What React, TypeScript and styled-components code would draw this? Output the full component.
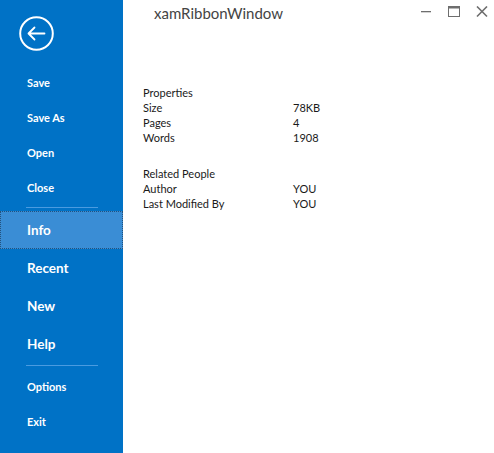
import React from "react";
import styled, { createGlobalStyle } from "styled-components";

const GlobalStyle = createGlobalStyle`
  html, body {
    margin: 0;
    padding: 0;
    background: #ffffff;
    font-family: "Segoe UI", Lato, "Noto Sans", sans-serif;
  }
`;

type NavItem = {
  label: string;
  large?: boolean;
  active?: boolean;
  separatorBefore?: boolean;
};

const navItems: NavItem[] = [
  { label: "Save" },
  { label: "Save As" },
  { label: "Open" },
  { label: "Close" },
  { label: "Info", large: true, active: true, separatorBefore: true },
  { label: "Recent", large: true },
  { label: "New", large: true },
  { label: "Help", large: true },
  { label: "Options", separatorBefore: true },
  { label: "Exit" },
];

type Prop = { name: string; value: string };

const sections: { title: string; rows: Prop[] }[] = [
  {
    title: "Properties",
    rows: [
      { name: "Size", value: "78KB" },
      { name: "Pages", value: "4" },
      { name: "Words", value: "1908" },
    ],
  },
  {
    title: "Related People",
    rows: [
      { name: "Author", value: "YOU" },
      { name: "Last Modified By", value: "YOU" },
    ],
  },
];

function BackButton() {
  return (
    <BackCircle>
      <svg width="35" height="35" viewBox="0 0 35 35">
        <circle cx="17.5" cy="17.5" r="16.3" fill="none" stroke="#fff" strokeWidth="2" />
        <path
          d="M9.5 17.5 H25.5 M9.5 17.5 L15.5 11.5 M9.5 17.5 L15.5 23.5"
          fill="none"
          stroke="#fff"
          strokeWidth="1.8"
          strokeLinecap="round"
        />
      </svg>
    </BackCircle>
  );
}

function WindowControls() {
  return (
    <Controls>
      <svg width="12" height="12" viewBox="0 0 12 12">
        <rect x="1" y="5" width="10" height="1.3" fill="#6e6e6e" />
      </svg>
      <svg width="12" height="12" viewBox="0 0 12 12">
        <rect x="0.5" y="0.5" width="11" height="10" fill="none" stroke="#6e6e6e" strokeWidth="1" />
        <rect x="0.5" y="0.5" width="11" height="2" fill="#6e6e6e" />
      </svg>
      <svg width="12" height="12" viewBox="0 0 12 12">
        <path d="M1 0.5 L11 10.5 M11 0.5 L1 10.5" stroke="#6e6e6e" strokeWidth="1.6" />
      </svg>
    </Controls>
  );
}

export default function App() {
  return (
    <>
      <GlobalStyle />
      <Window>
        <Sidebar>
          <BackButton />
          {navItems.map((item) => (
            <React.Fragment key={item.label}>
              {item.separatorBefore && (
                <Separator>
                  <SeparatorLine />
                </Separator>
              )}
              <NavButton $large={item.large} $active={item.active}>
                {item.label}
              </NavButton>
            </React.Fragment>
          ))}
        </Sidebar>
        <Main>
          <TitleBar>
            <Title>xamRibbonWindow</Title>
            <WindowControls />
          </TitleBar>
          <Content>
            {sections.map((section) => (
              <Section key={section.title}>
                <SectionTitle>{section.title}</SectionTitle>
                {section.rows.map((row) => (
                  <Row key={row.name}>
                    <Cell>{row.name}</Cell>
                    <Cell>{row.value}</Cell>
                  </Row>
                ))}
              </Section>
            ))}
          </Content>
        </Main>
      </Window>
    </>
  );
}

const Window = styled.div`
  display: flex;
  width: 494px;
  height: 453px;
  overflow: hidden;
`;

const Sidebar = styled.nav`
  width: 123px;
  flex-shrink: 0;
  background: #0072c6;
  display: flex;
  flex-direction: column;
  padding-top: 16px;
  box-sizing: border-box;
`;

const BackCircle = styled.div`
  width: 35px;
  height: 35px;
  margin-left: 19px;
  margin-bottom: 14px;
  svg {
    display: block;
  }
`;

const NavButton = styled.div<{ $large?: boolean; $active?: boolean }>`
  height: ${(p) => (p.$large ? 38 : 35)}px;
  box-sizing: border-box;
  display: flex;
  align-items: center;
  padding-left: 26px;
  color: #ffffff;
  font-size: ${(p) => (p.$large ? 13.5 : 11)}px;
  font-weight: 700;
  background: ${(p) => (p.$active ? "#3a8dd5" : "transparent")};
  border: 1px dotted ${(p) => (p.$active ? "#24527c" : "transparent")};
  padding-bottom: 1px;
`;

const Separator = styled.div`
  height: 6px;
  padding-top: 2px;
  box-sizing: border-box;
  padding-left: 26px;
`;

const SeparatorLine = styled.div`
  width: 72px;
  height: 1px;
  background: #4a9be0;
`;

const Main = styled.main`
  flex: 1;
  display: flex;
  flex-direction: column;
`;

const TitleBar = styled.header`
  display: flex;
  align-items: center;
  justify-content: space-between;
  height: 28px;
  padding-left: 31px;
  padding-right: 6px;
`;

const Title = styled.div`
  font-size: 15px;
  color: #444444;
  margin-top: -3px;
`;

const Controls = styled.div`
  display: flex;
  align-items: center;
  gap: 16px;
  margin-top: -4px;
  svg {
    display: block;
  }
`;

const Content = styled.div`
  padding-top: 57px;
  padding-left: 20px;
  display: flex;
  flex-direction: column;
  gap: 21px;
`;

const Section = styled.section`
  display: flex;
  flex-direction: column;
`;

const SectionTitle = styled.div`
  font-size: 11px;
  color: #1a1a1a;
  line-height: 15px;
`;

const Row = styled.div`
  display: grid;
  grid-template-columns: 150px auto;
  font-size: 11px;
  line-height: 15px;
  color: #1a1a1a;
`;

const Cell = styled.div``;
